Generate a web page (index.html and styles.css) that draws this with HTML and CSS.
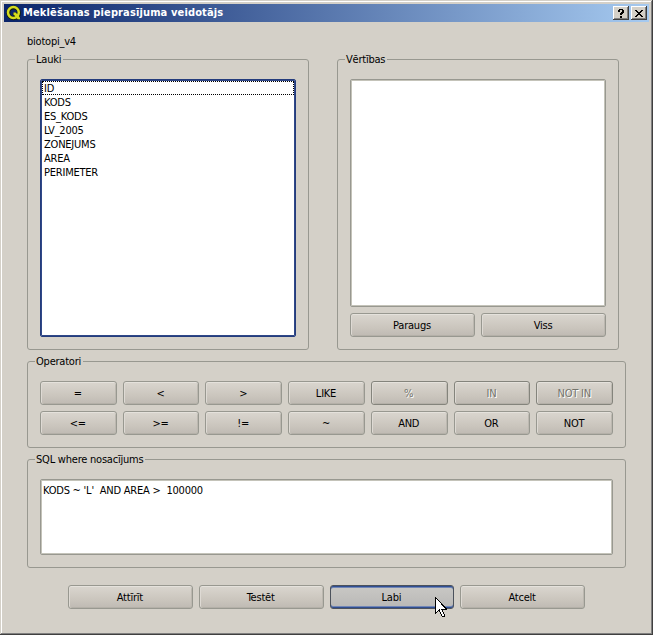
FILE: index.html
```html
<!DOCTYPE html>
<html lang="lv">
<head>
<meta charset="utf-8">
<title>Meklēšanas pieprasījuma veidotājs</title>
<link rel="stylesheet" href="styles.css">
</head>
<body>
<div class="window">
  <header class="titlebar">
    <svg class="logo" width="16" height="16" viewBox="0 0 16 16">
      <circle cx="7.6" cy="7.9" r="5.3" fill="none" stroke="#17200b" stroke-width="4"/>
      <path d="M8 8l5 6" stroke="#17200b" stroke-width="4"/>
      <circle cx="7.4" cy="7.5" r="5.4" fill="none" stroke="#d5dc20" stroke-width="2.5"/>
      <path d="M7.5 7.5h2.2l4.3 5v1.7h-2.4L7.5 9.3z" fill="#d5dc20"/>
    </svg>
    <h1 class="title">Meklēšanas pieprasījuma veidotājs</h1>
    <button class="caption" aria-label="?"><svg width="12" height="10" viewBox="0 0 12 10" shape-rendering="crispEdges"><path d="M4 0h4v1h1v3h-1v1h-1v1h-2v-2h1v-1h1v-2h-2v2h-2v-2h1zM5 7h2v2h-2z"/></svg></button>
    <button class="caption" aria-label="×"><svg width="12" height="10" viewBox="0 0 12 10" shape-rendering="crispEdges"><path d="M2 1h2v1h1v1h2v-1h1v-1h2v1h-1v1h-1v1h-1v1h1v1h1v1h1v1h-2v-1h-1v-1h-2v1h-1v1h-2v-1h1v-1h1v-1h1v-1h-1v-1h-1v-1h-1z"/></svg></button>
  </header>
  <main class="content">
    <p class="layer">biotopi_v4</p>
    <div class="columns">
      <section class="group">
        <h2 class="legend">Lauki</h2>
        <ul class="list focused">
          <li class="current">ID</li>
          <li>KODS</li>
          <li>ES_KODS</li>
          <li>LV_2005</li>
          <li>ZONEJUMS</li>
          <li>AREA</li>
          <li>PERIMETER</li>
        </ul>
      </section>
      <section class="group values">
        <h2 class="legend">Vērtības</h2>
        <div class="list"></div>
        <div class="pair">
          <button class="btn">Paraugs</button>
          <button class="btn">Viss</button>
        </div>
      </section>
    </div>
    <section class="group operators">
      <h2 class="legend">Operatori</h2>
      <div class="grid">
        <button class="btn">=</button>
        <button class="btn">&lt;</button>
        <button class="btn">&gt;</button>
        <button class="btn">LIKE</button>
        <button class="btn" disabled>%</button>
        <button class="btn" disabled>IN</button>
        <button class="btn" disabled>NOT IN</button>
        <button class="btn">&lt;=</button>
        <button class="btn">&gt;=</button>
        <button class="btn">!=</button>
        <button class="btn">~</button>
        <button class="btn">AND</button>
        <button class="btn">OR</button>
        <button class="btn">NOT</button>
      </div>
    </section>
    <section class="group where">
      <h2 class="legend">SQL where nosacījums</h2>
      <div class="list sql">KODS ~ 'L'  AND AREA &gt;  100000</div>
    </section>
    <footer class="actions">
      <button class="btn">Attīrīt</button>
      <button class="btn">Testēt</button>
      <button class="btn default">Labi</button>
      <button class="btn">Atcelt</button>
    </footer>
  </main>
  <svg class="cursor" width="12" height="21" viewBox="0 0 12 21" shape-rendering="crispEdges">
    <path d="M.5 .5v16l3.7-3.7 3 7h2.2v-1.5l-2.7-6.3h4.8z" fill="#fff" stroke="#000"/>
  </svg>
</div>
</body>
</html>
```

FILE: styles.css
```css
* { box-sizing: border-box; margin: 0; padding: 0; }

body {
  width: 653px;
  height: 635px;
  overflow: hidden;
  background: #d4d0c8;
  color: #000;
  font: 11px/14px "DejaVu Sans Condensed", "DejaVu Sans", sans-serif;
  font-stretch: condensed;
  letter-spacing: -0.22px;
}

.window {
  position: relative;
  width: 653px;
  height: 635px;
  padding: 4px;
  box-shadow: inset -1px -1px #404040, inset 1px 1px #d4d0c8,
    inset -2px -2px #808080, inset 2px 2px #fff;
}

.titlebar {
  display: flex;
  align-items: center;
  height: 18px;
  padding: 0 2px;
  background: linear-gradient(90deg, #0a246a, #a6caf0);
}

.logo { flex: none; }

.title {
  flex: 1;
  margin-left: 1px;
  color: #fff;
  font-size: 11px;
  line-height: 18px;
  letter-spacing: 0.13px;
  white-space: nowrap;
}

.caption {
  width: 16px;
  height: 14px;
  margin-left: 2px;
  border: 0;
  background: #d4d0c8;
  box-shadow: inset -1px -1px #404040, inset 1px 1px #fff, inset -2px -2px #808080;
}

.caption svg { display: block; margin: 2px 0 0 2px; }

.content { padding: 13px 0 0 23px; }

.layer { height: 24px; }

.columns { display: flex; gap: 28px; height: 291px; }

.group {
  position: relative;
  width: 282px;
  padding: 19px 12px 12px;
  border: 1px solid #989890;
  border-radius: 3px;
}

.legend {
  position: absolute;
  top: -7px;
  left: 7px;
  padding: 0 2px 0 1px;
  background: #d4d0c8;
  font: inherit;
  white-space: nowrap;
}

.list {
  height: 258px;
  padding: 1px;
  border: 1px solid #989890;
  border-radius: 2px;
  background: #fff;
  box-shadow: inset 0 0 0 1px #c4c3b9;
  list-style: none;
}

.list.focused {
  border-color: #243c7c;
  box-shadow: inset 0 0 0 1px #304888;
}

.list li { height: 14px; padding: 0 1px; border: 1px solid transparent; line-height: 13px; }
.list li.current { border: 1px dotted #000; }

.values .list { height: 228px; }

.pair { display: grid; grid-template-columns: 1fr 1fr; gap: 6px; margin-top: 6px; }

.btn {
  height: 24px;
  padding: 2px 1px 0 0;
  border: 1px solid #989890;
  border-radius: 3px;
  background: linear-gradient(#dad6cf, #cbc6be 60%, #bfbab3);
  box-shadow: inset 0 1px #e5e2dc, inset 1px 0 #dedad4, inset -1px 0 #bcb8b0, inset 0 -1px #b4b0a8;
  color: #000;
  font: inherit;
  letter-spacing: inherit;
}

.btn:disabled {
  border-color: #84847c;
  color: #74746c;
  text-shadow: 1px 1px #fff;
}

.btn.default {
  border-color: #4c525c;
  background: linear-gradient(#c9c8c5, #b9b8b6);
  box-shadow: inset 0 1px #304e92, inset 0 2px #7186b5, inset 0 -1px #304e92,
    inset 0 -2px #7186b5;
}

.operators { width: 599px; height: 87px; margin-top: 11px; }
.grid { display: grid; grid-template-columns: repeat(7, 1fr); gap: 6px; }

.where { width: 599px; height: 109px; margin-top: 11px; }

.list.sql { height: 76px; padding: 4px 2px; white-space: pre; }

.actions {
  display: grid;
  grid-template-columns: repeat(4, 1fr);
  gap: 6px;
  width: 517px;
  margin: 17px 0 0 41px;
}

.cursor { position: absolute; left: 435px; top: 597px; }
```
